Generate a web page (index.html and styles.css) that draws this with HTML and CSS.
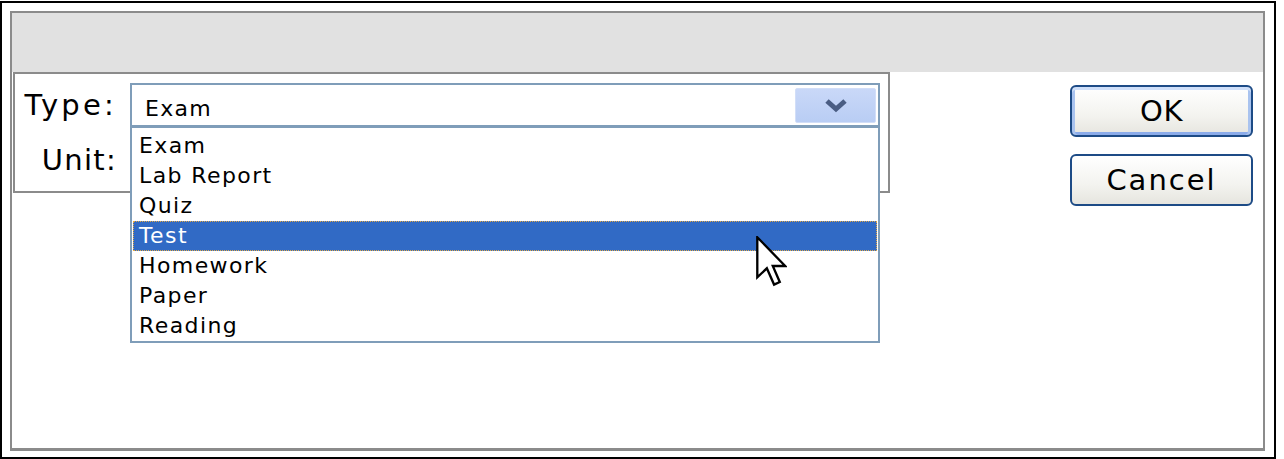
FILE: index.html
```html
<!DOCTYPE html>
<html>
<head>
<meta charset="utf-8">
<link rel="stylesheet" href="styles.css">
</head>
<body>
<div class="frame">
  <div class="window">
    <div class="header"></div>
    <div class="content">
      <div class="panel">
        <div class="row">
          <span class="lbl lbl-type">Type:</span>
          <div class="combo">
            <div class="field">
              <span class="value">Exam</span>
              <span class="drop-btn">
                <svg width="24" height="16" viewBox="0 0 24 16"><polyline points="3,3 12,11 21,3" fill="none" stroke="#4a5d83" stroke-width="5"/></svg>
              </span>
            </div>
            <ul class="list">
              <li class="item">Exam</li>
              <li class="item">Lab Report</li>
              <li class="item">Quiz</li>
              <li class="item selected">Test</li>
              <li class="item">Homework</li>
              <li class="item">Paper</li>
              <li class="item">Reading</li>
            </ul>
            <svg class="cursor" width="31" height="53" viewBox="0 0 12 20.5"><path d="M0.5 0.5 L0.5 16 L4.2 12.5 L7 18.8 L9.2 17.8 L6.5 11.6 L11.3 11.6 Z" fill="#fff" stroke="#000" stroke-width="0.9" stroke-linejoin="miter"/></svg>
          </div>
        </div>
        <div class="row">
          <span class="lbl lbl-unit">Unit:</span>
          <div class="combo">
            <div class="field field-hidden"></div>
          </div>
        </div>
      </div>
      <div class="buttons">
        <button class="btn btn-default">OK</button>
        <button class="btn btn-cancel">Cancel</button>
      </div>
    </div>
  </div>
</div>
</body>
</html>
```

FILE: styles.css
```css
html, body {
  margin: 0;
  padding: 0;
  background: #fff;
}

.frame {
  margin-top: 1px;
  width: 1276px;
  height: 458px;
  box-sizing: border-box;
  border: 2px solid #000;
  padding: 8px 0 0 8px;
}

.window {
  width: 1255px;
  height: 440px;
  box-sizing: border-box;
  border: 2px solid #8b8b8b;
  border-bottom-width: 3px;
  background: #fff;
  display: flex;
  flex-direction: column;
}

.header {
  flex: none;
  height: 59px;
  background: #e1e1e1;
}

.content {
  flex: 1;
  display: flex;
  align-items: flex-start;
}

.panel {
  flex: none;
  margin-left: 1px;
  width: 877px;
  height: 121px;
  box-sizing: border-box;
  border: 2px solid #8b8b8b;
  background: #fff;
  padding-top: 9px;
  display: flex;
  flex-direction: column;
  gap: 11px;
}

.row {
  display: flex;
  align-items: center;
  height: 44px;
}

.lbl {
  flex: none;
  width: 102px;
  box-sizing: border-box;
  text-align: right;
  font-family: "DejaVu Sans", sans-serif;
  font-size: 29px;
  color: #000;
  white-space: nowrap;
}

.lbl-type {
  letter-spacing: 3.2px;
}

.lbl-unit {
  letter-spacing: 1.3px;
}

.combo {
  flex: none;
  position: relative;
  width: 750px;
  height: 44px;
  margin-left: 13px;
}

.field {
  box-sizing: border-box;
  width: 750px;
  height: 44px;
  border: 2px solid #7f9db9;
  background: #fff;
  display: flex;
  align-items: center;
}

.field-hidden {
  border-color: transparent;
}

.value {
  flex: 1;
  padding: 6px 0 0 13px;
  font-family: "DejaVu Sans", sans-serif;
  font-size: 22px;
  letter-spacing: 1.3px;
  color: #000;
}

.drop-btn {
  flex: none;
  width: 81px;
  height: 35px;
  margin: 1px 2px 0 0;
  box-sizing: border-box;
  border: 1px solid #d2def8;
  border-radius: 2px;
  background: linear-gradient(#c9d8f8, #b9cdf4);
  display: flex;
  align-items: center;
  justify-content: center;
}

.drop-btn svg {
  display: block;
  margin-top: 1px;
}

.list {
  position: absolute;
  left: 0;
  top: 44px;
  z-index: 2;
  width: 750px;
  box-sizing: border-box;
  margin: 0;
  padding: 3px 0 0 0;
  list-style: none;
  border: 2px solid #7f9db9;
  border-top-width: 1px;
  background: #fff;
}

.item {
  height: 30px;
  line-height: 30px;
  padding-left: 7px;
  font-family: "DejaVu Sans", sans-serif;
  font-size: 22px;
  letter-spacing: 1.4px;
  color: #000;
}

.item.selected {
  background: #316ac5;
  color: #fff;
  outline: 1px dotted #e0a848;
  outline-offset: -1px;
  margin: 0 1px;
  padding-left: 6px;
}

.cursor {
  position: absolute;
  left: 626px;
  top: 153px;
  z-index: 3;
}

.buttons {
  margin-left: auto;
  margin-right: 10px;
  padding-top: 13px;
  display: flex;
  flex-direction: column;
  gap: 17px;
}

.btn {
  width: 183px;
  height: 52px;
  box-sizing: border-box;
  border: 2px solid #1d4b86;
  border-radius: 6px;
  background: linear-gradient(#ffffff, #f3f3ef 60%, #e6e5df);
  font-family: "DejaVu Sans", sans-serif;
  font-size: 29px;
  color: #000;
  padding: 0;
}

.btn-default {
  letter-spacing: 0.5px;
  box-shadow: inset 0 3px 0 #cfdff9, inset 3px 0 0 #a9c3ef, inset -3px 0 0 #a9c3ef, inset 0 -3px 0 #8cacea;
}

.btn-cancel {
  letter-spacing: 2px;
}
```
